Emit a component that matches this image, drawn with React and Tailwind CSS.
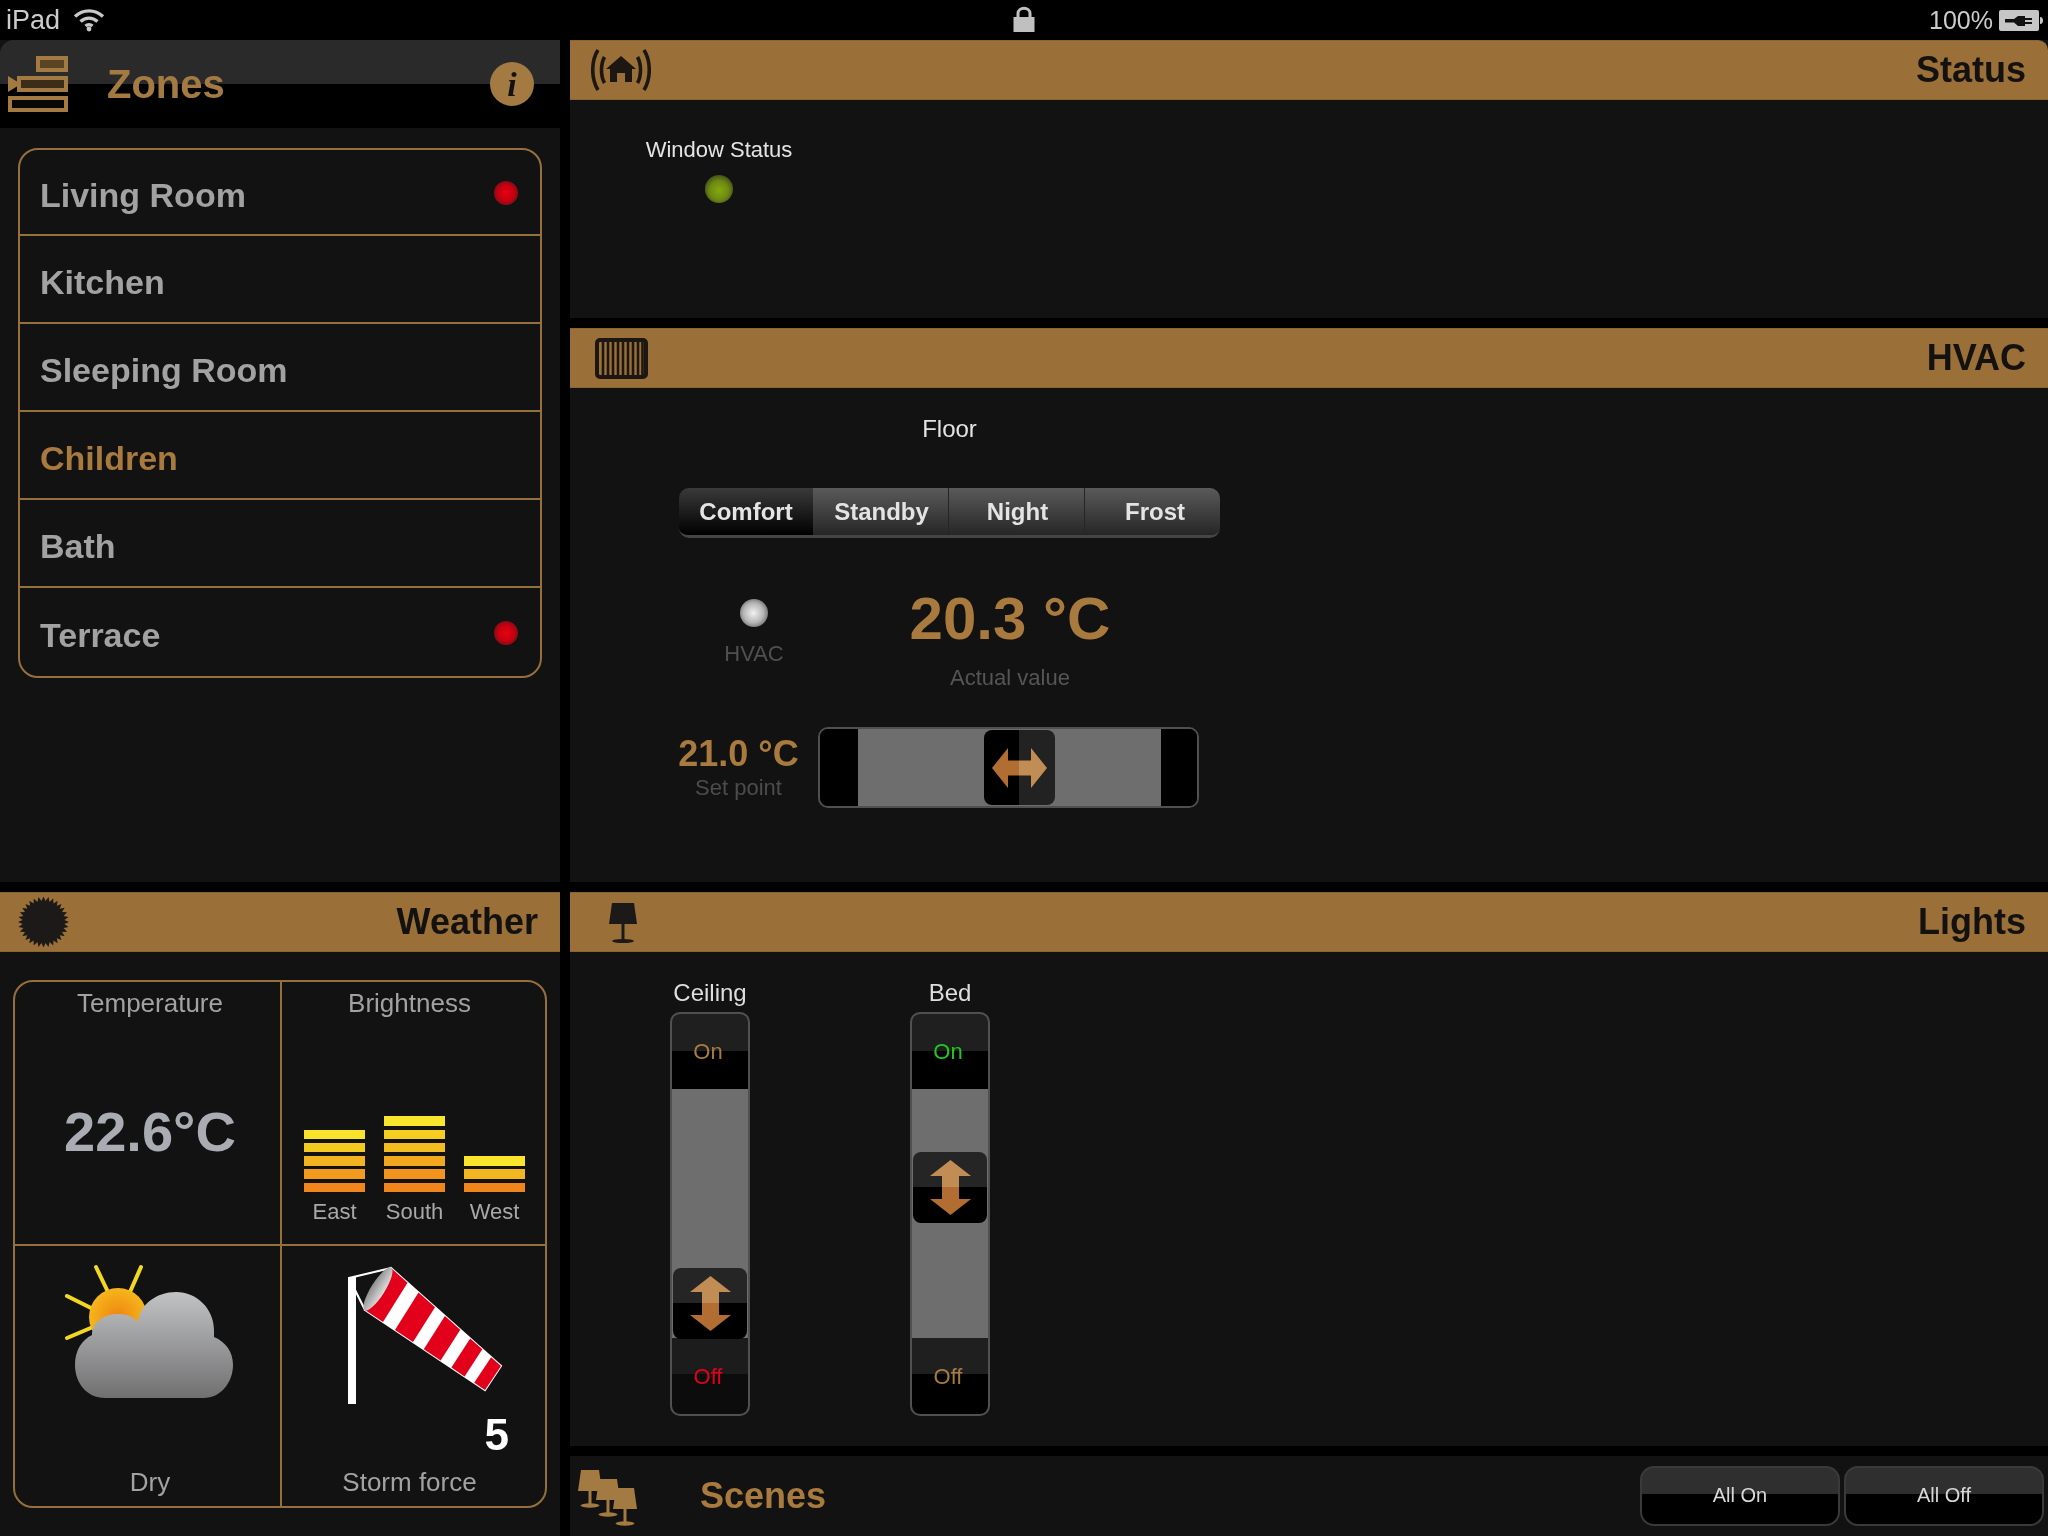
import React from 'react';

const sans = "font-['Liberation_Sans',Arial,sans-serif]";
const ZONES = ['Living Room', 'Kitchen', 'Sleeping Room', 'Children', 'Bath', 'Terrace'];

// top to bottom
const BARS = [
  { label: 'East', colors: ['bg-[#f8e32c]', 'bg-[#f5ca20]', 'bg-[#f1b420]', 'bg-[#f09a1e]', 'bg-[#f0861c]'] },
  { label: 'South', colors: ['bg-[#f9e52c]', 'bg-[#f6ce22]', 'bg-[#f3bc20]', 'bg-[#f1a81f]', 'bg-[#f0941d]', 'bg-[#f0851b]'] },
  { label: 'West', colors: ['bg-[#f9e52c]', 'bg-[#f2b620]', 'bg-[#f0851c]'] },
];

function Led({ className }) {
  return <div className={`rounded-full ${className}`} />;
}

function Header({ title, icon, className = '' }) {
  return (
    <div className={`h-[60px] shrink-0 flex items-center justify-between bg-[#9b7038] border-y border-[#8a6532] ${className}`}>
      {icon}
      <span className="pr-[22px] text-[36px] font-bold leading-none text-[#141210]">{title}</span>
    </div>
  );
}

function WifiIcon() {
  return (
    <svg width="32" height="24" viewBox="0 0 32 24" className="ml-[13px]" fill="none" stroke="#c8c8c8" strokeWidth="3.4">
      <path d="M2 8.5 C10 1 22 1 30 8.5" />
      <path d="M7.5 13.5 C12.5 9 19.5 9 24.5 13.5" />
      <path d="M12.5 18 C14.5 16.4 17.5 16.4 19.5 18" />
      <circle cx="16" cy="21" r="2.4" fill="#c8c8c8" stroke="none" />
    </svg>
  );
}

function LockIcon() {
  return (
    <svg width="22" height="26" viewBox="0 0 22 26" className="mt-[6px]">
      <path d="M5 12 V7.5 C5 0.5 17 0.5 17 7.5 V12" fill="none" stroke="#c0c0c0" strokeWidth="3" />
      <rect x="0.5" y="11" width="21" height="15" fill="#c0c0c0" />
    </svg>
  );
}

function BatteryIcon() {
  return (
    <svg width="44" height="21" viewBox="0 0 44 21" className="ml-[6px]">
      <rect x="0" y="0" width="40" height="21" rx="2" fill="#c6c6c6" />
      <path d="M41 7 C43.5 7 44 9 44 10.5 C44 12 43.5 14 41 14 Z" fill="#c6c6c6" />
      <path d="M6 9 H15 L19 6 H26 V8 H33 V10 H26 V12 H33 V14 H26 V16 H19 L15 12.5 H6 Z" fill="#111" />
    </svg>
  );
}

function ZonesIcon() {
  return (
    <svg width="60" height="56" viewBox="0 0 60 56" fill="#0a0806" stroke="#a37a42" strokeWidth="4">
      <rect x="30" y="2" width="28" height="12" fill="#5a4426" />
      <rect x="11" y="22" width="47" height="12" fill="#3c2d18" />
      <rect x="2" y="42" width="56" height="12" />
      <path d="M0 20 L13 28 L0 36 Z" fill="#a37a42" stroke="none" />
    </svg>
  );
}

function StatusIcon() {
  return (
    <svg width="60" height="42" viewBox="0 0 60 42" fill="none" stroke="#1c1712" strokeWidth="3.6" className="ml-[21px]">
      <path d="M7 1 C0 12 0 30 7 41" />
      <path d="M13.5 8 C9.5 15 9.5 27 13.5 34" />
      <path d="M53 1 C60 12 60 30 53 41" />
      <path d="M46.5 8 C50.5 15 50.5 27 46.5 34" />
      <path d="M30 7 L45 20 L41 20 L41 33 L19 33 L19 20 L15 20 Z" fill="#1c1712" stroke="none" />
      <rect x="26" y="24" width="8" height="9" fill="#9b7038" stroke="none" />
    </svg>
  );
}

function RadiatorIcon() {
  return (
    <svg width="54" height="41" viewBox="0 0 54 41" fill="none" stroke="#1c1712" className="ml-[25px]">
      <rect x="2" y="2" width="49" height="37" rx="3" strokeWidth="4" />
      <path d="M8 4 V37 M13 4 V37 M18 4 V37 M23 4 V37 M28 4 V37 M33 4 V37 M38 4 V37 M43 4 V37 M47.5 4 V37" strokeWidth="2.6" />
    </svg>
  );
}

function SunIcon() {
  const points = Array.from({ length: 64 }, (_, i) => {
    const r = i % 2 === 0 ? 25.5 : 21;
    const a = (i * Math.PI) / 32;
    return `${(25.5 + r * Math.cos(a)).toFixed(2)},${(25 + r * Math.sin(a)).toFixed(2)}`;
  }).join(' ');
  return (
    <svg width="51" height="50" viewBox="0 0 51 50" className="ml-[18px]">
      <polygon points={points} fill="#1c1a18" />
    </svg>
  );
}

function LampIcon() {
  return (
    <svg width="28" height="40" viewBox="0 0 28 40" fill="#1c1a18" className="ml-[39px] mt-[2px]">
      <path d="M3 0 H25 L28 21 H0 Z" />
      <rect x="12.5" y="21" width="3" height="16" />
      <ellipse cx="14" cy="38" rx="11" ry="2" />
    </svg>
  );
}

function ScenesIcon() {
  const lamp = (x, y) => (
    <g transform={`translate(${x} ${y})`}>
      <path d="M3 0 H21 L24 21 H0 Z" />
      <rect x="10.5" y="21" width="3" height="14" />
      <ellipse cx="12" cy="35.5" rx="9.5" ry="2.2" />
    </g>
  );
  return (
    <svg width="60" height="58" viewBox="0 0 60 58" fill="#a37a42" className="ml-[8px] mt-[14px] shrink-0">
      {lamp(0, 0)}
      {lamp(18, 9)}
      {lamp(35, 18)}
    </svg>
  );
}

function CloudIcon() {
  return (
    <svg width="265" height="160" viewBox="15 1246 265 160" className="block">
      <defs>
        <radialGradient id="sun">
          <stop offset="0%" stopColor="#ee8410" />
          <stop offset="100%" stopColor="#f6b61c" />
        </radialGradient>
        <linearGradient id="cloud" x1="0" y1="0" x2="0" y2="1">
          <stop offset="0%" stopColor="#c2c3c5" />
          <stop offset="100%" stopColor="#707071" />
        </linearGradient>
      </defs>
      <g stroke="#f2d81e" strokeWidth="4" strokeLinecap="round">
        <path d="M96 1267 L108 1292 M141 1267 L130 1292 M67 1296 L93 1309 M67 1338 L93 1327" />
      </g>
      <circle cx="118" cy="1317" r="29" fill="url(#sun)" />
      <path
        d="M105 1398 C87 1398 75 1383 75 1365 C75 1350 82 1340 92 1335 C92 1322 104 1314 118 1314 C127 1314 134 1317 138 1322 C140 1304 157 1292 176 1292 C197 1292 214 1309 214 1330 L214 1337 C226 1342 233 1352 233 1365 C233 1383 220 1398 204 1398 Z"
        fill="url(#cloud)"
      />
    </svg>
  );
}

function WindsockIcon() {
  const A = [391, 1268];
  const B = [365, 1310];
  const C = [485, 1390];
  const D = [501, 1366];
  const lerp = (p, q, t) => `${p[0] + (q[0] - p[0]) * t},${p[1] + (q[1] - p[1]) * t}`;
  const band = (s, e) => `${lerp(A, D, s)} ${lerp(A, D, e)} ${lerp(B, C, e)} ${lerp(B, C, s)}`;
  const reds = [[0, 0.15], [0.25, 0.4], [0.49, 0.63], [0.72, 0.83], [0.91, 1]];
  return (
    <svg width="263" height="160" viewBox="282 1246 263 160" className="block">
      <defs>
        <linearGradient id="mouth" x1="0" y1="0" x2="1" y2="0">
          <stop offset="0%" stopColor="#8d8d8d" />
          <stop offset="100%" stopColor="#dddddd" />
        </linearGradient>
      </defs>
      <rect x="348" y="1277" width="8" height="127" fill="#fff" />
      <path d="M349 1278 L391 1268 M349 1278 L365 1310" stroke="#fff" strokeWidth="2" fill="none" />
      <polygon points={`${A.join(',')} ${D.join(',')} ${C.join(',')} ${B.join(',')}`} fill="#fff" stroke="#fff" strokeWidth="2" />
      {reds.map(([s, e]) => (
        <polygon key={s} points={band(s, e)} fill="#e2001a" />
      ))}
      <ellipse cx="378" cy="1289" rx="7" ry="25" transform="rotate(32 378 1289)" fill="url(#mouth)" />
    </svg>
  );
}

function VArrow() {
  return (
    <svg width="41" height="55" viewBox="0 0 41 55">
      <path d="M20.5 0 L41 16 H29 V27 H12 V16 H0 Z" fill="#c28c55" />
      <path d="M12 27 H29 V39 H41 L20.5 55 L0 39 H12 Z" fill="#b26d33" />
    </svg>
  );
}

function HArrow() {
  return (
    <svg width="55" height="40" viewBox="0 0 55 40">
      <path d="M27 12.5 H16 V0 L0 20 L16 40 V27.5 H27 Z" fill="#b26d33" />
      <path d="M27 12.5 H39 V0 L55 20 L39 40 V27.5 H27 Z" fill="#c28c55" />
    </svg>
  );
}

function LightSlider({ label, thumbClass, onClass, offClass, offCellClass }) {
  return (
    <div className="w-[80px] flex flex-col items-center">
      <div className="text-[24px] leading-[28px] text-[#dedede] whitespace-nowrap">{label}</div>
      <div className="relative mt-[5px] w-[80px] h-[404px] flex flex-col rounded-[10px] border-2 border-[#505050] bg-[#6e6e6e] overflow-hidden">
        <div className="h-[75px] flex items-center justify-center pr-[4px] bg-[linear-gradient(#1f1f1f_50%,#000_50%)]">
          <span className={`text-[22px] ${onClass}`}>On</span>
        </div>
        <div className="flex-1" />
        <div className={`h-[76px] flex items-center justify-center pr-[4px] ${offCellClass}`}>
          <span className={`text-[22px] ${offClass}`}>Off</span>
        </div>
        <div className={`absolute left-[1px] w-[74px] h-[71px] rounded-[8px] flex items-center justify-center bg-[linear-gradient(#252525_50%,#000_50%)] ${thumbClass}`}>
          <VArrow />
        </div>
      </div>
    </div>
  );
}

function SceneButton({ children }) {
  return (
    <div className="w-[200px] h-[60px] pb-[3px] flex items-center justify-center rounded-[14px] border-2 border-[#3a3a3a] bg-[linear-gradient(#2f2f2f_47%,#000_47%)] text-[20px] text-[#d8d8d8]">
      {children}
    </div>
  );
}

export default function App() {
  return (
    <div className={`${sans} w-[2048px] h-[1536px] bg-black flex flex-col overflow-hidden blur-[0.6px]`}>
      {/* Status bar */}
      <div className="h-[40px] shrink-0 grid grid-cols-3 text-[#cccccc]">
        <div className="flex items-center pl-[6px] text-[27px]">
          iPad
          <WifiIcon />
        </div>
        <div className="flex justify-center">
          <LockIcon />
        </div>
        <div className="flex items-center justify-end pr-[5px] text-[25px]">
          100%
          <BatteryIcon />
        </div>
      </div>

      <div className="flex-1 flex gap-[10px] min-h-0">
        {/* Left column */}
        <div className="w-[560px] flex flex-col gap-[10px]">
          <div className="h-[842px] bg-[#121212] flex flex-col">
            <div className="h-[88px] flex items-center pl-[8px] pr-[26px] rounded-tl-[14px] bg-[linear-gradient(#2a2a2a_50%,#000_50%)]">
              <ZonesIcon />
              <span className="ml-[39px] text-[40px] font-bold text-[#a37a42]">Zones</span>
              <div className="ml-auto w-[44px] h-[44px] rounded-full bg-[#a37a42] flex items-center justify-center font-['Liberation_Serif',serif] italic font-bold text-[34px] text-[#15120e]">
                i
              </div>
            </div>
            <div className="mt-[20px] ml-[18px] w-[524px] rounded-[20px] border-2 border-[#96703c] divide-y-2 divide-[#96703c] overflow-hidden">
              {ZONES.map((zone, i) => (
                <div key={zone} className="h-[88px] first:h-[86px] pt-[2px] flex items-center justify-between pl-[20px] pr-[22px]">
                  <span className={`mt-[4px] text-[34px] font-bold ${zone === 'Children' ? 'text-[#a87a3e]' : 'text-[#a2a2a2]'}`}>{zone}</span>
                  {(i === 0 || i === 5) && (
                    <Led className="w-[24px] h-[24px] bg-[radial-gradient(circle_at_50%_50%,#e8000f_0%,#c20010_50%,#4a1a1a_90%)]" />
                  )}
                </div>
              ))}
            </div>
          </div>

          <div className="flex-1 bg-[#121212] flex flex-col">
            <Header title="Weather" icon={<SunIcon />} />
            <div className="mt-[28px] ml-[13px] w-[534px] h-[528px] rounded-[20px] border-2 border-[#96703c] grid grid-cols-[265px_2px_263px] grid-rows-[262px_2px_260px] text-[#a2a2a2]">
              <div className="flex flex-col items-center pl-[5px] pt-[6px]">
                <div className="text-[26px] leading-[30px]">Temperature</div>
                <div className="mt-[82px] text-[56px] leading-[64px] font-bold text-[#a9adb3]">22.6°C</div>
              </div>
              <div className="bg-[#96703c]" />
              <div className="flex flex-col pt-[6px] pb-[19px]">
                <div className="text-center pr-[8px] text-[26px] leading-[30px]">Brightness</div>
                <div className="mt-auto flex items-end gap-[19px] pl-[22px]">
                  {BARS.map((bar) => (
                    <div key={bar.label} className="w-[61px] flex flex-col gap-[3.8px] items-center">
                      {bar.colors.map((color, i) => (
                        <div key={i} className={`w-full h-[9.5px] ${color}`} />
                      ))}
                      <div className="mt-[3px] text-[22px] leading-[26px] text-[#a8a8a8]">{bar.label}</div>
                    </div>
                  ))}
                </div>
              </div>
              <div className="col-span-3 bg-[#96703c]" />
              <div className="flex flex-col pb-[9px]">
                <CloudIcon />
                <div className="mt-auto text-center pl-[5px] text-[26px] leading-[30px]">Dry</div>
              </div>
              <div className="bg-[#96703c]" />
              <div className="flex flex-col pb-[9px]">
                <WindsockIcon />
                <div className="mt-[5px] pr-[36px] text-right text-[44px] leading-[48px] font-bold text-white">5</div>
                <div className="mt-auto text-center pr-[8px] text-[26px] leading-[30px]">Storm force</div>
              </div>
            </div>
          </div>
        </div>

        {/* Right column */}
        <div className="flex-1 flex flex-col gap-[10px]">
          <div className="h-[278px] bg-[#121212]">
            <Header title="Status" icon={<StatusIcon />} className="rounded-tr-[10px]" />
            <div className="ml-[75px] w-[148px] pt-[36px] flex flex-col items-center">
              <div className="text-[22px] leading-[28px] text-[#e4e4e4] whitespace-nowrap">Window Status</div>
              <Led className="mt-[11px] w-[28px] h-[28px] bg-[radial-gradient(circle_at_50%_55%,#86a80e_0%,#6d8a12_45%,#35391f_85%)]" />
            </div>
          </div>

          <div className="h-[554px] bg-[#121212]">
            <Header title="HVAC" icon={<RadiatorIcon />} />
            <div className="pl-[109px]">
              <div className="mt-[27px] w-[541px] text-center text-[24px] leading-[28px] text-[#e4e4e4]">Floor</div>
              <div className="mt-[45px] w-[541px] h-[50px] flex rounded-[10px] border-b-[3px] border-[#454545] overflow-hidden text-[24px] font-bold text-[#e4e4e4]">
                <div className="w-[134px] flex items-center justify-center bg-[linear-gradient(#3a3a3a,#000)]">Comfort</div>
                <div className="w-[136px] pl-[2px] flex items-center justify-center border-r border-[#252525] bg-[linear-gradient(#5a5a5a,#262626)]">Standby</div>
                <div className="w-[136px] pl-[2px] flex items-center justify-center border-r border-[#252525] bg-[linear-gradient(#5a5a5a,#262626)]">Night</div>
                <div className="flex-1 pl-[5px] flex items-center justify-center bg-[linear-gradient(#5a5a5a,#262626)]">Frost</div>
              </div>
              <div className="mt-[47px] flex items-start">
                <div className="ml-[25px] w-[100px] pt-[14px] flex flex-col items-center">
                  <Led className="w-[28px] h-[28px] bg-[radial-gradient(circle_at_48%_50%,#f2f2f2_0%,#b4b4b4_50%,#4a4a4a_90%)]" />
                  <div className="mt-[14px] text-[22px] leading-[26px] text-[#505050]">HVAC</div>
                </div>
                <div className="ml-[56px] w-[300px] flex flex-col items-center">
                  <div className="text-[60px] leading-[68px] font-bold text-[#a87a3e]">20.3 °C</div>
                  <div className="mt-[11px] text-[22px] leading-[28px] text-[#555555]">Actual value</div>
                </div>
              </div>
              <div className="mt-[35px] flex items-start">
                <div className="w-[119px] pt-[7px] flex flex-col items-center">
                  <div className="text-[36px] leading-[40px] font-bold text-[#a87a3e] whitespace-nowrap">21.0 °C</div>
                  <div className="mt-[1px] text-[22px] leading-[26px] text-[#4c4c4c]">Set point</div>
                </div>
                <div className="relative ml-[20px] w-[381px] h-[81px] flex rounded-[10px] border-2 border-[#505050] overflow-hidden">
                  <div className="w-[38px] bg-black" />
                  <div className="flex-1 bg-[#6e6e6e]" />
                  <div className="w-[36px] bg-black" />
                  <div className="absolute left-[164px] top-[1px] w-[71px] h-[75px] rounded-[8px] flex items-center justify-center bg-[linear-gradient(90deg,#000_50%,#222_50%)]">
                    <HArrow />
                  </div>
                </div>
              </div>
            </div>
          </div>

          <div className="h-[554px] bg-[#121212]">
            <Header title="Lights" icon={<LampIcon />} />
            <div className="pl-[100px] pt-[27px] flex gap-[160px]">
              <LightSlider
                label="Ceiling"
                thumbClass="top-[254px]"
                onClass="text-[#a87a3e]"
                offClass="text-[#e2001a]"
                offCellClass="bg-[linear-gradient(#1c1c1c_48%,#0c0c0c_48%)]"
              />
              <LightSlider
                label="Bed"
                thumbClass="top-[138px]"
                onClass="text-[#1fc81f]"
                offClass="text-[#a87a3e]"
                offCellClass="bg-[linear-gradient(#1f1f1f_48%,#000_48%)]"
              />
            </div>
          </div>

          <div className="flex-1 bg-[#121212] flex items-start">
            <ScenesIcon />
            <span className="ml-[62px] mt-[20px] text-[36px] leading-[40px] font-bold text-[#a87a3e]">Scenes</span>
            <div className="ml-auto mt-[10px] mr-[4px] flex gap-[4px]">
              <SceneButton>All On</SceneButton>
              <SceneButton>All Off</SceneButton>
            </div>
          </div>
        </div>
      </div>
    </div>
  );
}
